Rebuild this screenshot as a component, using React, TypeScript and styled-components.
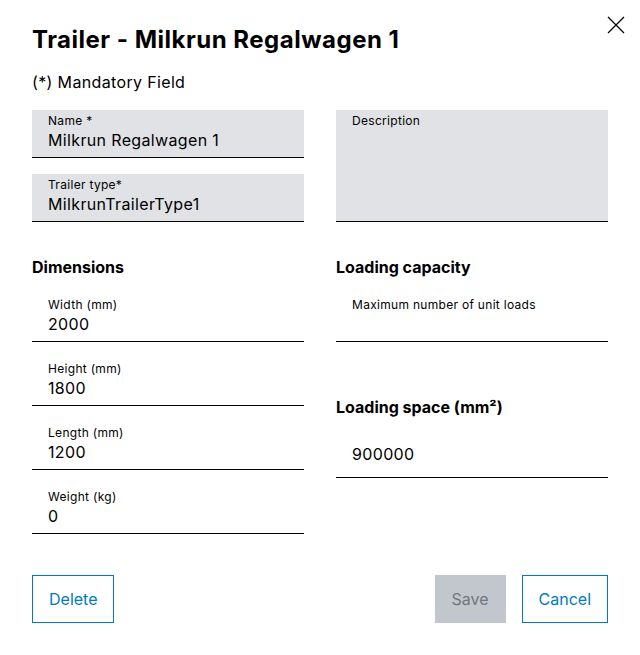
import React from "react";
import styled, { createGlobalStyle } from "styled-components";

const GlobalStyle = createGlobalStyle`
  body {
    margin: 0;
    background: #ffffff;
    font-family: Inter, "Noto Sans", "Liberation Sans", sans-serif;
    color: #000000;
  }
`;

const Dialog = styled.div`
  position: relative;
  width: 640px;
  height: 655px;
  box-sizing: border-box;
  padding: 24px 32px 0 32px;
  display: flex;
  flex-direction: column;
`;

const CloseButton = styled.button`
  position: absolute;
  top: 15px;
  right: 14px;
  width: 20px;
  height: 20px;
  padding: 0;
  border: none;
  background: transparent;
  cursor: pointer;
`;

const Title = styled.h1`
  margin: 0;
  font-size: 24px;
  line-height: 32px;
  font-weight: 700;
  letter-spacing: 0.5px;
`;

const Hint = styled.p`
  margin: 14px 0 0 0;
  font-size: 16px;
  line-height: 24px;
  letter-spacing: 0.35px;
`;

const Columns = styled.div`
  display: grid;
  grid-template-columns: 272px 272px;
  column-gap: 32px;
  margin-top: 16px;
`;

const Column = styled.div`
  display: flex;
  flex-direction: column;
  gap: 16px;
`;

const Heading = styled.h2<{ $top: number; $bottom: number }>`
  margin: ${(p) => p.$top}px 0 ${(p) => p.$bottom - 16}px 0;
  font-size: 16px;
  line-height: 24px;
  font-weight: 700;
`;

const Field = styled.div<{ $filled?: boolean; $tall?: boolean }>`
  box-sizing: border-box;
  height: ${(p) => (p.$tall ? 112 : 48)}px;
  border-bottom: 1px solid #000000;
  background: ${(p) => (p.$filled ? "#e0e2e5" : "transparent")};
  padding: 3px 16px 0 16px;
  display: flex;
  flex-direction: column;
  justify-content: flex-start;
`;

const BareField = styled(Field)`
  padding-top: 0;
  justify-content: center;
`;

const Label = styled.span`
  font-size: 12px;
  line-height: 15px;
  letter-spacing: 0.3px;
`;

const Value = styled.span`
  font-size: 16px;
  line-height: 24px;
  letter-spacing: 0.35px;
`;

const Footer = styled.div`
  display: flex;
  align-items: center;
  gap: 16px;
  margin-top: 41px;
`;

const Spacer = styled.div`
  flex: 1;
`;

const Button = styled.button<{ $disabled?: boolean }>`
  height: 48px;
  padding: 0 16px;
  font-family: inherit;
  font-size: 16px;
  background: ${(p) => (p.$disabled ? "#c1c7cc" : "#ffffff")};
  color: ${(p) => (p.$disabled ? "#71767c" : "#007bc0")};
  border: 1px solid ${(p) => (p.$disabled ? "#c1c7cc" : "#007bc0")};
  cursor: ${(p) => (p.$disabled ? "default" : "pointer")};
`;

export default function App() {
  return (
    <>
      <GlobalStyle />
      <Dialog>
        <CloseButton aria-label="close">
          <svg width="20" height="20" viewBox="0 0 20 20">
            <path d="M2 2 L18 18 M18 2 L2 18" stroke="#000" strokeWidth="1.2" fill="none" />
          </svg>
        </CloseButton>
        <Title>Trailer - Milkrun Regalwagen 1</Title>
        <Hint>(*) Mandatory Field</Hint>
        <Columns>
          <Column>
            <Field $filled>
              <Label>Name *</Label>
              <Value>Milkrun Regalwagen 1</Value>
            </Field>
            <Field $filled>
              <Label>Trailer type*</Label>
              <Value>MilkrunTrailerType1</Value>
            </Field>
            <Heading $top={17} $bottom={15}>Dimensions</Heading>
            <Field>
              <Label>Width (mm)</Label>
              <Value>2000</Value>
            </Field>
            <Field>
              <Label>Height (mm)</Label>
              <Value>1800</Value>
            </Field>
            <Field>
              <Label>Length (mm)</Label>
              <Value>1200</Value>
            </Field>
            <Field>
              <Label>Weight (kg)</Label>
              <Value>0</Value>
            </Field>
          </Column>
          <Column>
            <Field $filled $tall>
              <Label>Description</Label>
            </Field>
            <Heading $top={17} $bottom={15}>Loading capacity</Heading>
            <Field>
              <Label>Maximum number of unit loads</Label>
            </Field>
            <Heading $top={37} $bottom={11}>Loading space (mm²)</Heading>
            <BareField>
              <Value>900000</Value>
            </BareField>
          </Column>
        </Columns>
        <Footer>
          <Button>Delete</Button>
          <Spacer />
          <Button $disabled>Save</Button>
          <Button>Cancel</Button>
        </Footer>
      </Dialog>
    </>
  );
}
